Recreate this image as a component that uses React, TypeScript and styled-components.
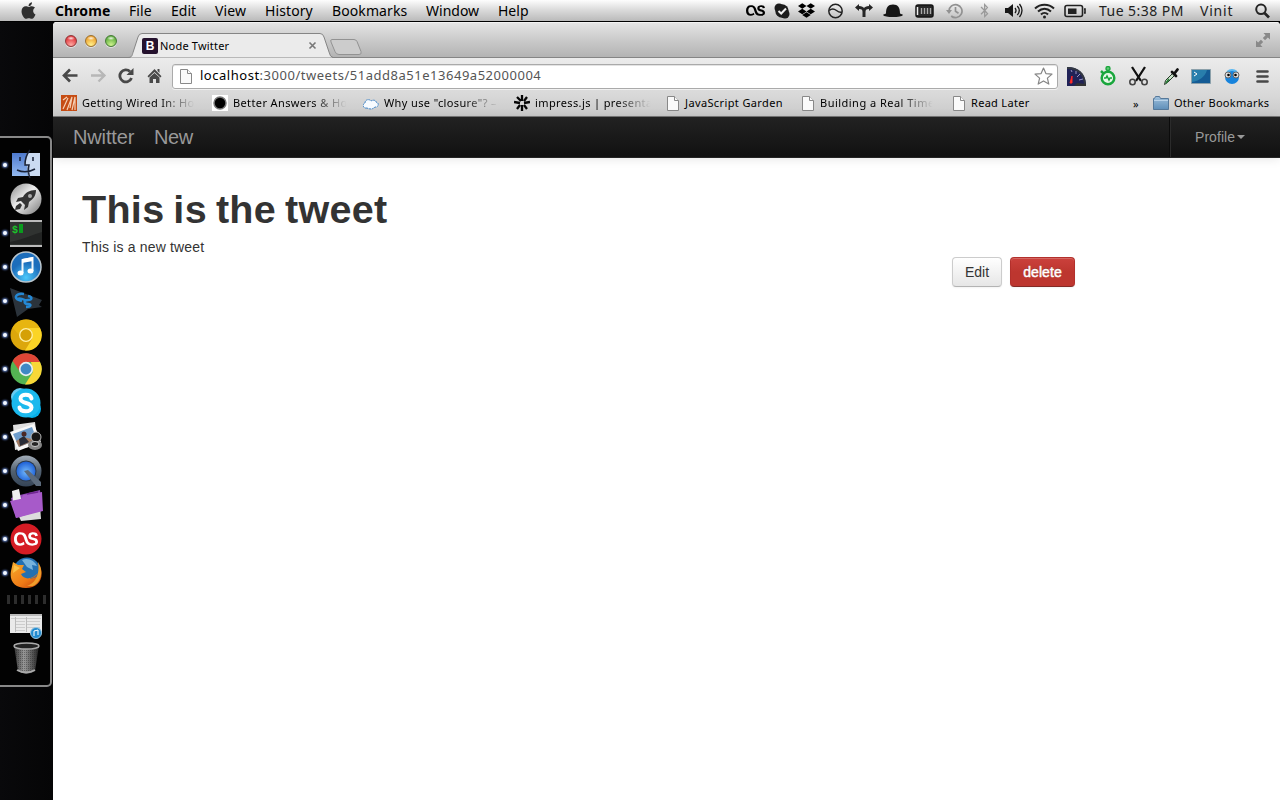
import React from "react";
import styled, { createGlobalStyle, css } from "styled-components";
import { FaApple, FaBluetoothB, FaDropbox, FaLastfm } from "react-icons/fa";

const Global = createGlobalStyle`
  * { box-sizing: border-box; }
  body { margin: 0; background: #060607; overflow: hidden; }
  svg { display: block; flex: none; }
`;

const lucida = css`font-family: "Noto Sans", "Open Sans", sans-serif;`;
const helvetica = css`font-family: "Liberation Sans", Arial, sans-serif;`;

const Desktop = styled.div`
  width: 1280px; height: 800px; display: flex; flex-direction: column;
  background: #08080a; overflow: hidden;
`;
const MenuBar = styled.header`
  ${lucida}
  height: 22px; flex: none; display: flex; align-items: center; color: #000; font-size: 14px;
  line-height: 21px; background: linear-gradient(#fdfdfd, #dcdcdc 45%, #bababa);
  border-bottom: 1px solid #000; padding-left: 19px;
`;
const Slot = styled.div<{ $w: number; $ls?: number; $bold?: boolean; $color?: string }>`
  width: ${p => p.$w}px; flex: none; display: flex; align-items: center; height: 21px;
  white-space: nowrap; letter-spacing: ${p => p.$ls ?? 0}px;
  font-weight: ${p => (p.$bold ? 700 : 400)}; color: ${p => p.$color ?? "#000"};
`;
const MenuSpacer = styled.div`flex: 1;`;
const Below = styled.div`display: flex; flex: 1; min-height: 0;`;

const Side = styled.aside`width: 53px; flex: none; padding-top: 114px; background: linear-gradient(90deg, #09090b, #050506);`;
const Dock = styled.div`
  width: 52px; height: 551px; background: #020202; border: 2px solid #888; border-left: 0;
  border-radius: 0 5px 5px 0; padding-top: 10px; display: flex; flex-direction: column;
`;
const DockItem = styled.div<{ $h?: number }>`height: ${p => p.$h ?? 34}px; flex: none; display: flex; align-items: center;`;
const Light = styled.i<{ $on: boolean }>`
  width: 4px; height: 4px; margin: 0 3px 0 3px; border-radius: 50%; flex: none;
  background: ${p => (p.$on ? "#f4f8ff" : "transparent")};
  box-shadow: ${p => (p.$on ? "0 0 2px 1px #5a76b5" : "none")};
`;
const Separator = styled.div`
  height: 9px; width: 39px; margin: 5px 0 4px 7px; flex: none;
  background: repeating-linear-gradient(90deg, #2d2d2d 0 3px, transparent 3px 7.1px);
`;

const Window = styled.main`
  width: 1227px; display: flex; flex-direction: column; border-radius: 4px 4px 0 0;
  overflow: hidden; background: #fff;
`;
const TabStrip = styled.div`
  height: 36px; flex: none; display: flex; align-items: flex-end; position: relative;
  background: linear-gradient(#e6e6e6, #cacaca 50%, #b2b2b2);
  box-shadow: inset 0 1px #f3f3f3, inset 0 -1px #858585;
`;
const Lights = styled.div`display: flex; gap: 8px; padding: 0 0 11px 12px; width: 75px;`;
const TrafficLight = styled.i<{ $a: string; $b: string; $c: string }>`
  width: 12px; height: 12px; border-radius: 50%; border: 1px solid ${p => p.$c};
  background: radial-gradient(ellipse 4px 2px at 50% 22%, #fffd, #fff0), radial-gradient(circle at 50% 90%, ${p => p.$b}, ${p => p.$a} 75%);
  box-shadow: 0 1px #fff8;
`;
const Tab = styled.div`
  ${lucida}
  width: 205px; height: 25px; position: relative; display: flex; align-items: center;
  font-size: 11px; padding-left: 14px; color: #000;
`;
const TabShape = styled.svg`position: absolute; left: 0; top: 0;`;
const Favicon = styled.span`
  ${helvetica}
  width: 16px; height: 16px; border-radius: 2px; background: #25122e; color: #fff; position: relative;
  font-size: 12px; font-weight: 700; line-height: 16px; text-align: center;
`;
const TabTitle = styled.span`position: relative; margin-left: 2px; width: 148px; letter-spacing: .2px;`;
const TabClose = styled.svg`position: relative;`;
const NewTab = styled.svg`margin: 0 0 1px -4px;`;
const FullScreen = styled.svg`margin: 0 10px 11px auto;`;

const Toolbar = styled.div`
  height: 36px; flex: none; display: flex; align-items: center; padding-left: 9px;
  background: linear-gradient(#ececec, #d9d9d9);
`;
const NavIcon = styled.div<{ $w: number }>`width: ${p => p.$w}px; flex: none; display: flex;`;
const Omnibox = styled.div`
  ${lucida}
  width: 886px; height: 25px; flex: none; display: flex; align-items: center; background: #fff;
  border: 1px solid #aaa; border-radius: 3px; padding: 0 4px 0 7px; font-size: 13px;
  color: #555; box-shadow: inset 0 1px #e3e3e3, 0 1px #f1f1f1; margin-right: 9px;
`;
const Url = styled.span`margin-left: 8px; flex: 1; line-height: 18px; padding-bottom: 3px; letter-spacing: .52px; b { font-weight: 400; color: #000; }`;

const Bookmarks = styled.div`
  ${lucida}
  height: 23px; flex: none; display: flex; align-items: center; padding: 0 0 4px 8px;
  background: linear-gradient(#d9d9d9, #cacaca); border-bottom: 1px solid #777; font-size: 11px; color: #000;
`;
const Bookmark = styled.div<{ $w: number }>`width: ${p => p.$w}px; flex: none; display: flex; align-items: center;`;
const BookmarkText = styled.span<{ $w: number; $ls: number; $fade?: boolean; $gap?: number }>`
  width: ${p => p.$w}px; margin-left: ${p => p.$gap ?? 5}px; white-space: nowrap; letter-spacing: ${p => p.$ls}px; line-height: 16px;
  ${p => p.$fade && css`mask-image: linear-gradient(90deg, #000 68%, transparent 98%);`}
`;

const NavBar = styled.nav`
  ${helvetica}
  height: 41px; flex: none; display: flex; align-items: center; padding-left: 20px; color: #999;
  background: linear-gradient(#222, #111); border-bottom: 1px solid #252525;
  box-shadow: 0 1px 10px rgba(0,0,0,.1); font-size: 20px;
`;
const Brand = styled.a<{ $w: number; $ls: number }>`width: ${p => p.$w}px; letter-spacing: ${p => p.$ls}px;`;
const Profile = styled.a`
  margin-left: auto; height: 40px; width: 110px; border-left: 1px solid #2b2b2b; box-shadow: -1px 0 #0b0b0b;
  padding-left: 24px; display: flex; align-items: center; font-size: 14px; gap: 2px; letter-spacing: .05px;
`;
const Caret = styled.i`border: 4px solid transparent; border-top-color: #999; border-bottom: 0;`;
const Content = styled.section`${helvetica} padding: 31px 205px 0 29px; color: #333; font-size: 14px; line-height: 20px;`;
const Title = styled.h1`margin: 0; font-size: 39.5px; line-height: 40px; font-weight: 700; letter-spacing: .3px; word-spacing: -2.3px;`;
const Body = styled.p`margin: 8px 0 0; letter-spacing: .17px;`;
const Actions = styled.div`display: flex; justify-content: flex-end; gap: 8px;`;
const Button = styled.button<{ $danger?: boolean }>`
  ${helvetica}
  width: ${p => (p.$danger ? 65 : 50)}px; height: 30px; border-radius: 4px; font-size: 14px; padding: 0; white-space: nowrap;
  border: 1px solid ${p => (p.$danger ? "#b3302c" : "#ccc")}; border-bottom-color: ${p => (p.$danger ? "#842a25" : "#b3b3b3")};
  color: ${p => (p.$danger ? "#fff" : "#333")};
  background: ${p => (p.$danger ? "linear-gradient(#cb413c, #bd362f 50%)" : "linear-gradient(#fff, #e6e6e6)")};
  box-shadow: inset 0 1px rgba(255,255,255,.2), 0 1px 2px rgba(0,0,0,.05);
  ${p => p.$danger && css`-webkit-text-stroke: .45px #fff; text-shadow: 0 -1px rgba(0,0,0,.25); letter-spacing: .1px;`}
`;

const MenuGlyph = ({ kind }: { kind: string }) => {
  switch (kind) {
    case "skype": return <svg width="16" height="16"><circle cx="5" cy="5" r="4.500" fill="#1c1c1c" /><circle cx="11" cy="11" r="4.500" fill="#1c1c1c" /><circle cx="8" cy="8" r="6.700" fill="#1c1c1c" /><path d="m4.500 8 2.700 2.500 4.800-5" fill="none" stroke="#eee" strokeWidth="2" /></svg>;
    case "globe": return <svg width="16" height="16" fill="none" stroke="#222" strokeWidth="1.500"><circle cx="7.500" cy="8" r="6.700" /><path d="M1.300 7.500C4 5 6.500 6 8.500 7.500s4 2 5.400 1.500" /></svg>;
    case "fork": return <svg width="18" height="14"><path d="M0 3.500 4 0v2c3 0 4 1 5 2 1-1 2-2 5-2V0l4 3.500L14 7V5c-3 0-3.500 1-3.500 3v5h-3V8C7.500 6 7 5 4 5v2z" fill="#252525" /></svg>;
    case "hat": return <svg width="20" height="14" fill="#161616"><path d="M3 9.500C3 3.500 5 .5 10 .5s7 3 7 9l3 1.300c-1 2-5 2.200-10 2.200S1 12.800 0 10.800z" /></svg>;
    case "memory": return <svg width="20" height="14"><rect x="1" y="1" width="17" height="12" rx="2" fill="#282828" stroke="#151515" strokeWidth="1.500" /><path d="M2.500 3v8" stroke="#eee" strokeWidth="1.500" /><path d="M6.500 4v6M9.500 4v6M12.500 4v6M15.500 4v6" stroke="#aaa" strokeWidth="1.400" /></svg>;
    case "clock": return <svg width="17" height="16" fill="none" stroke="#919191" strokeWidth="1.700"><path d="M3 8a6.500 6.500 0 1 1 2.200 5M9.500 4v4.300l3 2" /><path d="m0 7 3 4 3-4z" fill="#919191" stroke="none" /></svg>;
    case "sound": return <svg width="19" height="15" fill="none" stroke="#171717" strokeWidth="1.300"><path d="M0 5h3l5-4v13l-5-4H0z" fill="#171717" stroke="none" /><path d="M10 5q2 2.500 0 5M12.300 3q4 4.500 0 9M14.500 1q5 6.500 0 13" /></svg>;
    case "wifi": return <svg width="21" height="16" fill="none" stroke="#222" strokeWidth="2"><path d="M1 5.500C6.500.500 14.500.500 20 5.500M4 8.600c4-3.700 9-3.700 13 0M7 11.500c2-2 5-2 7 0" /><circle cx="10.500" cy="14" r="1.500" fill="#222" stroke="none" /></svg>;
    case "battery": return <svg width="22" height="14" fill="none" stroke="#222" strokeWidth="1.600"><rect x="1" y="1.500" width="17.500" height="11" rx="2" /><rect x="4" y="4.500" width="8.500" height="5.500" fill="#222" stroke="none" /><path d="M20 5h1v4h-1" /></svg>;
    default: return <svg width="16" height="16" fill="none" stroke="#252525"><circle cx="6" cy="6.300" r="4.800" strokeWidth="2" /><path d="m9.500 10 4.500 4.500" strokeWidth="2.700" /></svg>;
  }
};

const DockIcon = ({ kind }: { kind: string }) => {
  const art: Record<string, React.ReactNode> = {
    finder: <><defs><linearGradient id="fi" x2="0" y2="1"><stop stopColor="#4d79ce" /><stop offset="1" stopColor="#93b9ef" /></linearGradient></defs><path d="M2 4h15l-3 12h3l1 11H2z" fill="url(#fi)" /><path d="M17 4h13v23H18l-1-11h-3z" fill="#cbdbf2" /><path d="M20 1c-4 5-5 10-5 15h4c-1 4-1 8 1 13M7 21q9 4 18-1M10 8v4M23 8v4" fill="none" stroke="#192237" strokeWidth="1.500" /></>,
    rocket: <><defs><linearGradient id="ro" x2="1" y2="1"><stop stopColor="#888" /><stop offset=".45" stopColor="#eee" /><stop offset="1" stopColor="#777" /></linearGradient></defs><circle cx="16" cy="16" r="15.500" fill="url(#ro)" /><path d="M26 7c-7 0-11 3-13 7l-5 1-2 4 5-1 4 4-1 5 4-3 1-5c4-3 7-6 7-12M10 20l-4 3-1 4 5-1 2-4z" fill="#333" /><circle cx="20" cy="13" r="2" fill="#aaa" /></>,
    terminal: <><rect y="3" width="32" height="27" fill="#303331" /><path d="M0 25C15 22 24 17 32 15v12H0z" fill="#222423" /><path d="M0 3h32v2H0zM0 28h32v2H0z" fill="#bbb" /><text x="2" y="16" fontFamily="Liberation Mono" fontWeight="700" fontSize="10" fill="#1bc62a">$</text><path d="M9 7h4v9H9z" fill="#0a9c1e" /></>,
    itunes: <><defs><radialGradient id="it" cy=".85"><stop stopColor="#4bc7fa" /><stop offset="1" stopColor="#1c6dbb" /></radialGradient></defs><circle cx="16" cy="16" r="15" fill="url(#it)" stroke="#bac6ce" strokeWidth="1.500" /><path d="M12.500 22V9l10-2v13" fill="none" stroke="#f0f6fb" strokeWidth="2" /><path d="m12 8 11-2v4l-11 2z" fill="#fff" /><ellipse cx="10.500" cy="22" rx="3" ry="2.500" fill="#fff" /><ellipse cx="20.500" cy="20" rx="3" ry="2.500" fill="#fff" /></>,
    swift: <><path d="m0 3 32 12-3 5 3 2-14 2-11 8z" fill="#2b333b" /><path d="M14 9c-8-1-11 4-5 6l3 1M18 11c5 1 4 4 0 4-5 0-4 4 0 4s3 3-2 3M7 14c3-1 7 0 9 2" fill="none" stroke="#2488d4" strokeWidth="2.500" /></>,
    canary: <><circle cx="16" cy="16" r="15.500" fill="#dca70c" /><path d="M2.500 8.500A15.500 15.500 0 0 1 30 9H16L9 16z" fill="#e7b510" /><path d="M30 9a15.500 15.500 0 0 1-15 22.500l7-11.500V12l-4-3z" fill="#fbd426" /><circle cx="16" cy="16" r="6.300" fill="#d5a006" stroke="#fff1a9" strokeWidth="1.300" /></>,
    chrome: <><circle cx="16" cy="16" r="15.500" fill="#54b453" /><path d="M2.600 8A15.500 15.500 0 0 1 30 9H16L9.500 18z" fill="#df4636" /><path d="M30 9a15.500 15.500 0 0 1-15 22.500l8-12.500-2-10z" fill="#f8d737" /><circle cx="16" cy="16" r="6.300" fill="#3f89c5" stroke="#e8eef2" strokeWidth="1.700" /></>,
    skype: <><circle cx="10" cy="10" r="9" fill="#67caf1" /><circle cx="22" cy="22" r="9" fill="#05aee8" /><circle cx="16" cy="16" r="14.500" fill="#1bb9ed" /><path d="M21.500 11.500c-1-5-11-5-11 0 0 6 11 3 11 9 0 5-11 5-12 0" fill="none" stroke="#fff" strokeWidth="4" strokeLinecap="round" /></>,
    photos: <><path d="m3 4 22-3 3 23-23 5z" fill="#dedede" /><path d="m0 11 24-8 7 18-23 9z" fill="#f7f7f7" /><path d="m3 13 19-7 5 13-18 7z" fill="#6d9ccb" /><path d="m6 20 7-4 13 3-17 7z" fill="#a47c62" /><circle cx="14" cy="13" r="2.500" fill="#4b2926" /><path d="m9 18 5-3 5 6-9 4z" fill="#272b37" /><ellipse cx="25" cy="24" rx="7" ry="5" fill="#858585" /><circle cx="26" cy="16" r="5" fill="#161616" stroke="#bbb" /><ellipse cx="25" cy="23" rx="4" ry="2.500" fill="#262626" stroke="#ccc" /></>,
    quicktime: <><defs><linearGradient id="qt" x2="0" y2="1"><stop stopColor="#a1acb8" /><stop offset=".5" stopColor="#526171" /><stop offset="1" stopColor="#354456" /></linearGradient><radialGradient id="qb" cy=".55" r=".6"><stop stopColor="#73b9fb" /><stop offset="1" stopColor="#1456d2" /></radialGradient></defs><circle cx="16" cy="16" r="15.500" fill="url(#qt)" /><circle cx="16" cy="16" r="10.500" fill="#2c3948" /><circle cx="16" cy="16" r="9.500" fill="url(#qb)" /><path d="m14 16 4-1 13 12v4h-5z" fill="#5c6b7c" /></>,
    folder: <><path d="m5 19 25-3 1 14-20 2z" fill="#ddd" /><path d="m1 9 9-3 20-5 2 20-26 8z" fill="#8e48b3" /><path d="m2 2 7-2 2 10-8 3z" fill="#eee" /><path d="m0 12 11-2 2-4 19-3 1 19-27 7z" fill="#a75ac9" /><path d="m17 5 11-2" stroke="#702593" strokeWidth="1.500" /></>,
    lastfm: <><circle cx="16" cy="16" r="15.500" fill="#d51c24" /><svg x="4" y="4" width="24" height="24" viewBox="0 0 24 24"><FaLastfm size={24} color="#fff" /></svg></>,
    firefox: <><defs><linearGradient id="ff" x2="1" y2="1"><stop stopColor="#f6ab2c" /><stop offset=".6" stopColor="#ef7a16" /><stop offset="1" stopColor="#bd3b0b" /></linearGradient></defs><circle cx="17" cy="14" r="13.500" fill="#2370b2" /><path d="M12 3c6-3 13 1 15 6l-5-1 1 5-6-3z" fill="#76b2dc" /><path d="m3 5 5 3 6 0-2 4 4 3-5 2c3 6 11 6 17-1-3 6-8 5-10 5 7 2 13-3 12-12 5 12-2 22-14 22C5 31-1 24 1 14z" fill="url(#ff)" /><path d="M28 5c6 9 3 20-5 24l-6 0c9-3 13-12 11-24" fill="#ef9d2b" /><path d="m4 8 6 3-7 5z" fill="#fac248" /></>,
    sheet: <><path d="M0 6h32v19H0z" fill="#eaeaea" /><path d="M0 6h32v2H0z" fill="#bbb" /><path d="M1 10.500h30M6 13.500h9M17 13.500h13M6 16.500h9M17 16.500h13M6 19.500h9M17 19.500h13M6 22.500h9" stroke="#cdcdcd" /><path d="M5.500 9v15M16.500 9v15" stroke="#bbb" /><circle cx="26" cy="25" r="5.500" fill="#218bd0" stroke="#9ac6df" /><path d="M24 28v-5l4-1v5" fill="none" stroke="#fff" /></>,
    trash: <><defs><linearGradient id="tr"><stop stopColor="#333" /><stop offset=".4" stopColor="#999" /><stop offset="1" stopColor="#222" /></linearGradient><pattern id="mesh" width="2" height="2" patternUnits="userSpaceOnUse"><path d="M0 0h1v1H0z" fill="#2226" /></pattern></defs><path d="M4 3h25l-4 26q-8 5-17 0z" fill="url(#tr)" /><path d="M4 3h25l-4 26q-8 5-17 0z" fill="url(#mesh)" /><ellipse cx="16.500" cy="4" rx="12.500" ry="3" fill="#222" stroke="#aaa" strokeWidth="1.500" /><path d="M7 28q9 5 18 0" fill="none" stroke="#aaa" strokeWidth="2" /></>
  };
  return <svg width="33" height="33" viewBox="0 0 33 33">{art[kind]}</svg>;
};

const PageIcon = () => <svg width="12" height="15" fill="#fafafa" stroke="#888"><path d="M.500.500h7l4 4v10H.500z" /><path d="M7.500.500v4h4" /></svg>;
const BookmarkIcon = ({ kind }: { kind: string }) => {
  switch (kind) {
    case "wired": return <svg width="16" height="16"><path d="M0 0h16v16H0z" fill="#c64c13" /><path d="m2 14 5-11M6 15l5-13-2 11M11 15l3-13v13M2 5l4-3" fill="none" stroke="#f5d0b4" strokeWidth="1.200" /></svg>;
    case "dot": return <svg width="16" height="16"><path d="M0 0h16v16H0z" fill="#fff" /><circle cx="8" cy="8" r="6" stroke="#777" strokeWidth="1.500" /></svg>;
    case "cloud": return <svg width="16" height="16"><path d="M4 13C0 14-1 9 2 8c0-4 5-4 6-2 3-2 5 0 5 1 4 1 2 6-1 5-3 3-6 2-8 1" fill="#f7fbff" stroke="#4286c7" strokeDasharray="2 .7" /></svg>;
    case "star": return <svg width="16" height="16" stroke="#050505" strokeWidth="2.300"><path d="M8 0v6M8 10v6M0 7l6 1M10 8l6-1M3 14l3-4M10 6l3-4M3 2l4 4M10 10l3 4" /></svg>;
    case "folder": return <svg width="16" height="14"><defs><linearGradient id="bf" x2="0" y2="1"><stop stopColor="#9fc0dc" /><stop offset="1" stopColor="#5f8fb9" /></linearGradient></defs><path d="M.500 2.500h1l1-2h4l1 2h8v11H.500z" stroke="#56799a" fill="url(#bf)" /><path d="M1 4.500h14" stroke="#b9d3e9" /></svg>;
    default: return <PageIcon />;
  }
};

const Extension = ({ kind }: { kind: string }) => {
  switch (kind) {
    case "speed": return <svg width="19" height="19"><path d="M0 0C11 0 18 6 19 17v2H0z" fill="#202257" /><path d="M0 1c11 0 17 6 18 16" fill="none" stroke="#333842" strokeWidth="2" /><path d="m3 16 2-7v7z" fill="#f43" stroke="#f22" /><path d="m4 3 1 2m4-1v3m4 0-3 3m6 2-4 1" stroke="#9997c3" /><path d="m7 19 3-3 9 1v2z" fill="#333" /></svg>;
    case "watch": return <svg width="16" height="20" fill="none" stroke="#19a63c"><circle cx="8" cy="12" r="6.300" strokeWidth="2.500" fill="#e7f8e8" /><circle cx="8" cy="2.500" r="2" fill="#62c978" strokeWidth="1.300" /><path d="m1 5 3 3" strokeWidth="2.500" /><path d="M4 12h2l1-2 2 4 1-2h2" strokeWidth="1.500" /></svg>;
    case "scissors": return <svg width="19" height="20" fill="none"><path d="m3 1 9 14M16 1 7 15" stroke="#111" strokeWidth="2.300" /><circle cx="3.500" cy="16" r="2.700" stroke="#444" strokeWidth="1.600" /><circle cx="15.500" cy="16" r="2.700" stroke="#444" strokeWidth="1.600" /></svg>;
    case "dropper": return <svg width="17" height="19"><path d="m1.500 17.500 1-4 7-7 2 2-7 7z" fill="#c8dfc7" stroke="#253a29" /><path d="m9 5 4 4M11 7l3.500-4.500" stroke="#111" strokeWidth="2.800" strokeLinecap="round" /><path d="m3 16 3-4" stroke="#247a32" strokeWidth="1.600" /></svg>;
    case "screen": return <svg width="20" height="15"><path d="M.500.500h19v14H.500z" fill="#145b95" stroke="#8ba0aa" /><path d="M1 13C8 12 14 8 16 1H1z" fill="#287eac" /><path d="m3 3 3 2-3 2" stroke="#fff" fill="none" /></svg>;
    default: return <svg width="16" height="17"><circle cx="8" cy="9" r="7" fill="#1683dc" /><path d="M3 4q5-4 10 0" stroke="#59b8f2" strokeWidth="2" fill="none" /><circle cx="4" cy="7" r="3" fill="#ddd" stroke="#666" /><circle cx="12" cy="7" r="3" fill="#ddd" stroke="#666" /><circle cx="4.500" cy="7" r="1.300" /><circle cx="11.500" cy="7" r="1.300" /></svg>;
  }
};

const menus: [string, number, number][] = [["Chrome", 74, .1], ["File", 42, .1], ["Edit", 44, 0], ["View", 50, .1], ["History", 67, .1], ["Bookmarks", 94, .1], ["Window", 72, 0], ["Help", 35, 0]];
const apps = ["finder", "rocket", "terminal", "itunes", "swift", "canary", "chrome", "skype", "photos", "quicktime", "folder", "lastfm", "firefox"];
const bookmarks: [string, string, number, number, boolean, number, number][] = [
  ["wired", "Getting Wired In: How", 151, 115, true, .33, 5], ["dot", "Better Answers & Ho", 151, 116, true, .38, 5],
  ["cloud", "Why use \"closure\"? –", 151, 117, true, .38, 5], ["star", "impress.js | presenta", 153, 118, true, .38, 5],
  ["page", "JavaScript Garden", 135, 105, false, .38, 6], ["page", "Building a Real Time", 151, 115, true, .48, 6], ["page", "Read Later", 180, 70, false, .3, 6]
];

export default function App() {
  return <Desktop>
    <Global />
    <MenuBar>
      <Slot $w={36}><FaApple size={19} color="#303030" /></Slot>
      {menus.map(([t, w, ls], i) => <Slot key={t} $w={w} $ls={ls} $bold={i === 0}>{t}</Slot>)}
      <MenuSpacer />
      <Slot $w={28}><FaLastfm size={19} /></Slot>
      <Slot $w={24}><MenuGlyph kind="skype" /></Slot>
      <Slot $w={30}><FaDropbox size={17} /></Slot>
      <Slot $w={27}><MenuGlyph kind="globe" /></Slot>
      <Slot $w={28}><MenuGlyph kind="fork" /></Slot>
      <Slot $w={32}><MenuGlyph kind="hat" /></Slot>
      <Slot $w={31}><MenuGlyph kind="memory" /></Slot>
      <Slot $w={31}><MenuGlyph kind="clock" /></Slot>
      <Slot $w={28}><FaBluetoothB size={15} color="#999" /></Slot>
      <Slot $w={29}><MenuGlyph kind="sound" /></Slot>
      <Slot $w={30}><MenuGlyph kind="wifi" /></Slot>
      <Slot $w={35}><MenuGlyph kind="battery" /></Slot>
      <Slot $w={101} $ls={.45} $color="#222">Tue 5:38 PM</Slot>
      <Slot $w={55} $ls={.8} $color="#222">Vinit</Slot>
      <Slot $w={25}><MenuGlyph kind="search" /></Slot>
    </MenuBar>
    <Below>
      <Side>
        <Dock>
          {apps.map(a => <DockItem key={a}><Light $on={a !== "rocket"} /><DockIcon kind={a} /></DockItem>)}
          <Separator />
          <DockItem $h={33}><Light $on={false} /><DockIcon kind="sheet" /></DockItem>
          <DockItem><Light $on={false} /><DockIcon kind="trash" /></DockItem>
        </Dock>
      </Side>
      <Window>
        <TabStrip>
          <Lights>
            <TrafficLight $a="#e0343a" $b="#ffaaa3" $c="#8f3839" />
            <TrafficLight $a="#eea12d" $b="#fff28d" $c="#9a702f" />
            <TrafficLight $a="#5fae3e" $b="#d0f490" $c="#467a38" />
          </Lights>
          <Tab>
            <TabShape width="205" height="25"><path d="M0 24.500c4 0 4-2 5-5L10 4q1-3.500 4-3.500h178q3 0 4 3.500l5 15q1 5 4 5.500z" fill="#ebebeb" /><path d="M0 24.500c4 0 4-2 5-5L10 4q1-3.500 4-3.500h178q3 0 4 3.500l5 15q1 5 4 5.500" fill="none" stroke="#858585" /></TabShape>
            <Favicon>B</Favicon><TabTitle>Node Twitter</TabTitle>
            <TabClose width="9" height="9" stroke="#777" strokeWidth="1.600"><path d="m1.500 1.500 6 6m0-6-6 6" /></TabClose>
          </Tab>
          <NewTab width="34" height="19"><path d="M3 1.500h22q2 0 3 2l4 10q1 3-2 3H10q-3 0-4-3L2 4Q1 1.500 3 1.500" fill="#ccc" stroke="#929292" /></NewTab>
          <FullScreen width="14" height="14" viewBox="0 0 15 15" fill="#898989"><path d="M8 0h7v7l-2.300-2.300-3 3-2.400-2.400 3-3zM0 8v7h7l-2.300-2.300 3-3-2.400-2.400-3 3z" /></FullScreen>
        </TabStrip>
        <Toolbar>
          <NavIcon $w={28}><svg width="17" height="16" fill="none" stroke="#484848" strokeWidth="2.700"><path d="M15.500 7.500H3M8 1.500l-6 6 6 6" /></svg></NavIcon>
          <NavIcon $w={28}><svg width="17" height="16" fill="none" stroke="#b7b7b7" strokeWidth="2.300"><path d="M1 7.500h12M8.500 1.500l6 6-6 6" /></svg></NavIcon>
          <NavIcon $w={29}><svg width="16" height="16" fill="none" stroke="#484848" strokeWidth="2.800"><path d="M13.500 10A6 6 0 1 1 12 3.500" /><path d="M15.500 0v7h-7z" fill="#484848" stroke="none" /></svg></NavIcon>
          <NavIcon $w={25}><svg width="15" height="16" fill="#484848"><path d="m7.500 1 7 7.300-1.200 1.200L7.500 4 1.700 9.500.500 8.300zM10.500 1h2v4l-2-2zM2.500 9.500l5-4.500 5 4.500V15H9v-4H6v4H2.500z" /></svg></NavIcon>
          <Omnibox><PageIcon /><Url><b>localhost</b>:3000/tweets/51add8a51e13649a52000004</Url>
            <svg width="19" height="19" fill="#fff" stroke="#868686" strokeWidth="1.200" strokeLinejoin="round"><path d="m9.500 1 2.400 5.600 6.100.500-4.600 4 1.400 6-5.300-3.200-5.300 3.200 1.400-6-4.600-4 6.100-.500z" /></svg>
          </Omnibox>
          <NavIcon $w={33}><Extension kind="speed" /></NavIcon>
          <NavIcon $w={29}><Extension kind="watch" /></NavIcon>
          <NavIcon $w={34}><Extension kind="scissors" /></NavIcon>
          <NavIcon $w={28}><Extension kind="dropper" /></NavIcon>
          <NavIcon $w={33}><Extension kind="screen" /></NavIcon>
          <NavIcon $w={32}><Extension kind="owl" /></NavIcon>
          <NavIcon $w={14}><svg width="13" height="13" stroke="#484848" strokeWidth="2.600" strokeLinecap="round"><path d="M1.500 1.500h10M1.500 6.500h10M1.500 11.500h10" /></svg></NavIcon>
        </Toolbar>
        <Bookmarks>
          {bookmarks.map(([k, t, w, tw, fade, ls, gap]) => <Bookmark key={t} $w={w}><BookmarkIcon kind={k} /><BookmarkText $w={tw} $fade={fade} $ls={ls} $gap={gap}>{t}</BookmarkText></Bookmark>)}
          <Bookmark $w={20}>»</Bookmark>
          <Bookmark $w={121}><BookmarkIcon kind="folder" /><BookmarkText $w={100} $ls={.26}>Other Bookmarks</BookmarkText></Bookmark>
        </Bookmarks>
        <NavBar><Brand $w={81} $ls={-.15}>Nwitter</Brand><Brand $w={60} $ls={-.4}>New</Brand><Profile>Profile<Caret /></Profile></NavBar>
        <Content>
          <Title>This is the tweet</Title>
          <Body>This is a new tweet</Body>
          <Actions><Button>Edit</Button><Button $danger>delete</Button></Actions>
        </Content>
      </Window>
    </Below>
  </Desktop>;
}
